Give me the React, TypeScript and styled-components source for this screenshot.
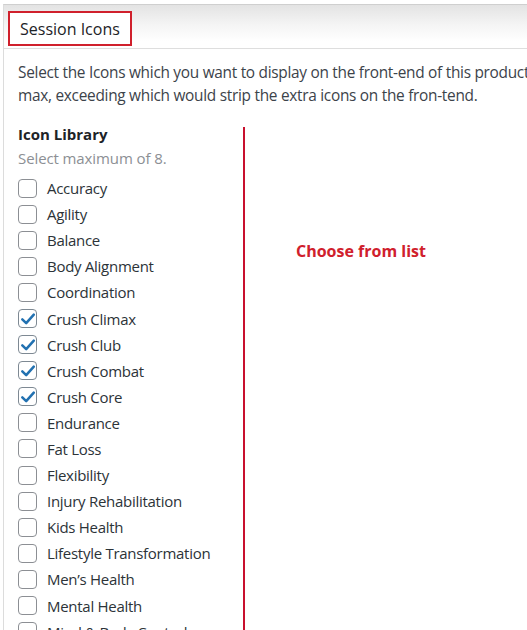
import styled, { createGlobalStyle } from "styled-components"

const GlobalStyle = createGlobalStyle`
  html, body {
    margin: 0;
    padding: 0;
    background: #ffffff;
    overflow: hidden;
  }
  body {
    font-family: "Open Sans", "Noto Sans", sans-serif;
  }
`;

const Page = styled.div`
  width: 527px;
  height: 630px;
  padding: 4px 0 0 3px;
  box-sizing: border-box;
  overflow: hidden;
`;

const Panel = styled.div`
  border-top: 1px solid #cfcfcf;
  border-left: 1px solid #dcdcdc;
  height: 100%;
  overflow: hidden;
`;

const Header = styled.div`
  height: 44px;
  background: linear-gradient(#e3e3e3 0%, #f4f4f4 45%, #ffffff 85%);
  border-bottom: 1px solid #dedede;
  padding: 6px 0 0 4px;
  box-sizing: border-box;
`;

const TitleBox = styled.div`
  display: inline-block;
  border: 2px solid #d0202c;
  padding: 0 10px;
  height: 35px;
  line-height: 32px;
  background: #ffffff;
  box-sizing: border-box;
  font-size: 16px;
  color: #1d2327;
  white-space: nowrap;
`;

const Body = styled.div`
  display: flex;
  padding: 12px 0 0 14px;
`;

const Description = styled.p`
  margin: 0;
  font-size: 15.4px;
  letter-spacing: -0.28px;
  line-height: 23px;
  color: #3c434a;
  white-space: nowrap;
`;

const Columns = styled.div`
  display: flex;
  margin-top: 15px;
`;

const LibraryColumn = styled.div`
  width: 225px;
  flex-shrink: 0;
`;

const LibraryTitle = styled.div`
  font-size: 15px;
  font-weight: 700;
  color: #1d2327;
  line-height: 24px;
`;

const Hint = styled.div`
  font-size: 15px;
  letter-spacing: -0.1px;
  color: #8c8f94;
  line-height: 24px;
  margin-bottom: 5px;
`;

const List = styled.div`
  display: flex;
  flex-direction: column;
`;

const Row = styled.label`
  display: flex;
  align-items: center;
  gap: 10px;
  height: 26.1px;
  font-size: 15px;
  letter-spacing: -0.28px;
  color: #2c3338;
  white-space: nowrap;
`;

const Box = styled.span<{ $checked: boolean }>`
  width: 19px;
  height: 19px;
  border: 1px solid ${(p) => (p.$checked ? "#7e8993" : "#8c8f94")};
  border-radius: 4px;
  box-sizing: border-box;
  display: flex;
  align-items: center;
  justify-content: center;
  background: #ffffff;
  flex-shrink: 0;
`;

const Divider = styled.div`
  width: 2px;
  background: #c8102e;
  align-self: stretch;
  margin-top: 5px;
  min-height: 600px;
`;

const Note = styled.div`
  padding: 118px 0 0 51px;
  font-size: 16px;
  font-weight: 700;
  color: #d0202c;
  white-space: nowrap;
`;

const icons = [
  "Accuracy",
  "Agility",
  "Balance",
  "Body Alignment",
  "Coordination",
  "Crush Climax",
  "Crush Club",
  "Crush Combat",
  "Crush Core",
  "Endurance",
  "Fat Loss",
  "Flexibility",
  "Injury Rehabilitation",
  "Kids Health",
  "Lifestyle Transformation",
  "Men’s Health",
  "Mental Health",
  "Mind & Body Control",
]

const checked = ["Crush Climax", "Crush Club", "Crush Combat", "Crush Core"]

const Check = () => (
  <svg width="16" height="16" viewBox="0 0 16 16">
    <path d="M2.3 8.3 L6.2 12.2 L13.8 3.6" fill="none" stroke="#2271b1" strokeWidth="2.5" strokeLinecap="round" strokeLinejoin="round" />
  </svg>
)

const App = () => {
  return (
    <Page>
      <GlobalStyle />
      <Panel>
        <Header>
          <TitleBox>Session Icons</TitleBox>
        </Header>
        <Body>
          <div>
            <Description>
              Select the Icons which you want to display on the front-end of this product. Choose up to 8
              <br />
              max, exceeding which would strip the extra icons on the fron-tend.
            </Description>
            <Columns>
              <LibraryColumn>
                <LibraryTitle>Icon Library</LibraryTitle>
                <Hint>Select maximum of 8.</Hint>
                <List>
                  {icons.map((name) => {
                    const isOn = checked.includes(name)
                    return (
                      <Row key={name}>
                        <Box $checked={isOn}>{isOn && <Check />}</Box>
                        {name}
                      </Row>
                    )
                  })}
                </List>
              </LibraryColumn>
              <Divider />
              <Note>Choose from list</Note>
            </Columns>
          </div>
        </Body>
      </Panel>
    </Page>
  )
}

export default App
